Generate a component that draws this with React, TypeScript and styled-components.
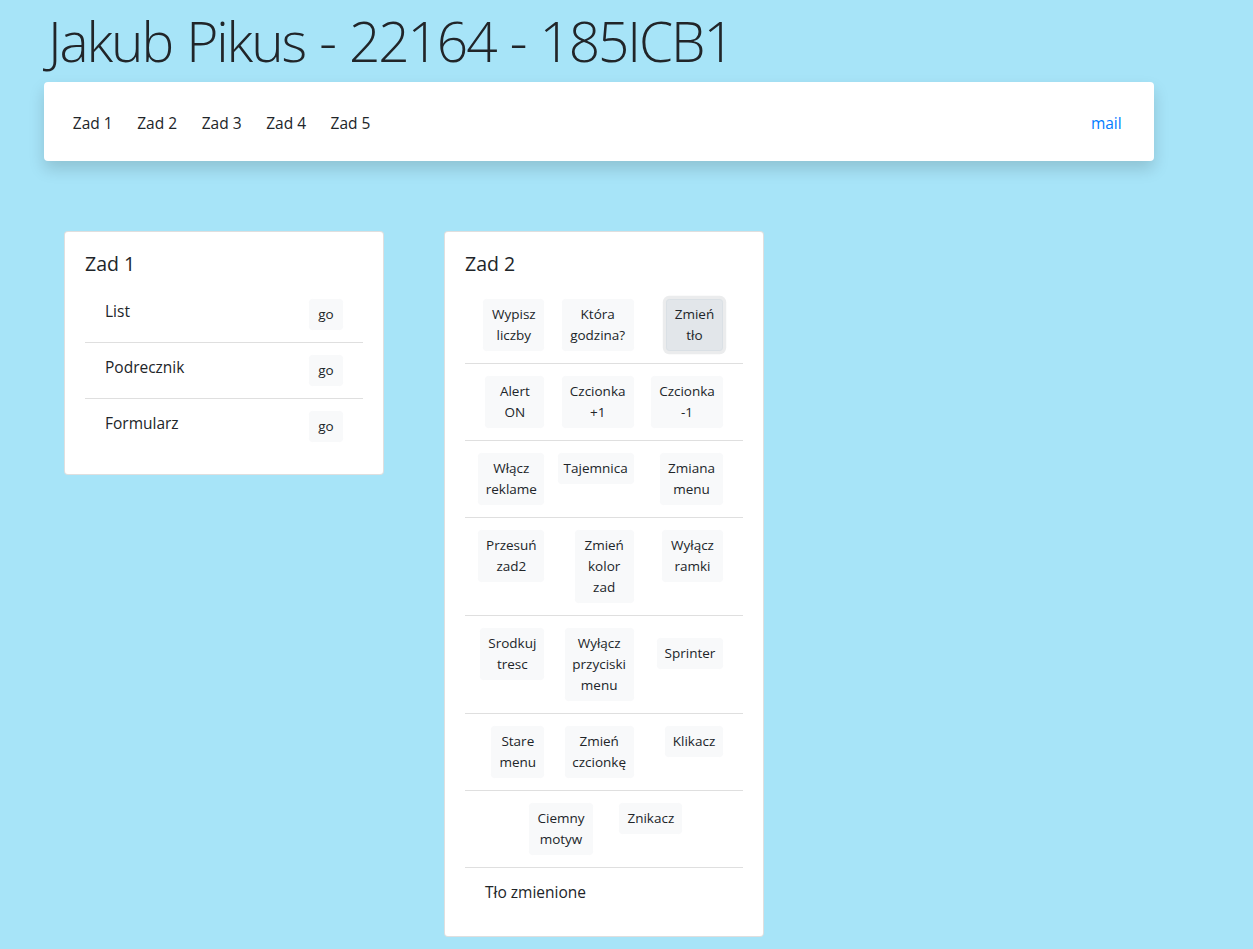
import React from "react";
import styled, { createGlobalStyle, css } from "styled-components";

const GlobalStyle = createGlobalStyle`
  html, body {
    margin: 0;
    padding: 0;
    background: #a7e4f8;
  }
  body {
    font-family: "Open Sans", "Noto Sans", Arial, sans-serif;
    color: #212529;
    font-size: 15.5px;
    line-height: 1.5;
  }
  * { box-sizing: border-box; }
`;

const Page = styled.div`
  padding: 8px 0 40px 44px;
  width: 1154px;
`;

const Title = styled.h1`
  margin: 0 0 8px 4px;
  font-size: 55px;
  font-weight: 300;
  line-height: 1.2;
  letter-spacing: -2.1px;
  word-spacing: 2px;
  color: #212529;
`;

const Navbar = styled.nav`
  height: 79px;
  background: #fff;
  border-radius: 4px;
  box-shadow: 0 8px 16px rgba(0, 0, 0, 0.15);
  display: flex;
  align-items: center;
  justify-content: space-between;
  padding: 2px 20px 0 16.5px;
`;

const NavList = styled.div`
  display: flex;
`;

const NavLink = styled.a<{ $accent?: boolean }>`
  padding: 0 12.3px;
  font-size: 15.5px;
  line-height: 24px;
  text-decoration: none;
  color: ${(p) => (p.$accent ? "#007bff" : "#212529")};
`;

const Cards = styled.div`
  display: flex;
  align-items: flex-start;
  gap: 60px;
  margin-top: 70px;
  padding-left: 20px;
`;

const Card = styled.section`
  width: 320px;
  background: #fff;
  border: 1px solid rgba(0, 0, 0, 0.125);
  border-radius: 4px;
  padding: 20px;
`;

const CardTitle = styled.h5`
  margin: 0 0 11px;
  font-size: 19.5px;
  font-weight: 500;
  line-height: 24px;
`;

const Item = styled.div`
  padding: 12px 20px;
  border-bottom: 1px solid rgba(0, 0, 0, 0.125);
  &:last-child {
    border-bottom: none;
  }
`;

const LinkItem = styled(Item)`
  display: flex;
  justify-content: space-between;
  align-items: flex-start;
`;

const ItemText = styled.span`
  font-size: 15.5px;
  line-height: 24px;
`;

const ButtonRow = styled.div<{ $cols: number }>`
  display: grid;
  grid-template-columns: repeat(${(p) => p.$cols}, 59.33px);
  column-gap: 30px;
  justify-items: end;
  align-items: start;
  ${(p) =>
    p.$cols === 2 &&
    css`
      justify-content: center;
      padding-left: 8px;
    `}
`;

const Btn = styled.button<{ $focused?: boolean; $offset?: number; $w: number }>`
  width: ${(p) => p.$w}px;
  font-family: inherit;
  font-size: 13.5px;
  line-height: 21px;
  padding: 4px 0;
  border-radius: 3.2px;
  white-space: nowrap;
  text-align: center;
  color: #212529;
  background: #f8f9fa;
  border: 1px solid #f8f9fa;
  margin-top: ${(p) => p.$offset ?? 0}px;
  cursor: pointer;
  ${(p) =>
    p.$focused &&
    css`
      background: #e2e6ea;
      border-color: #dae0e5;
      box-shadow: 0 0 0 3.2px rgba(216, 217, 219, 0.5);
    `}
`;

type B = { lines: string[]; w: number; focused?: boolean; offset?: number };

const rows: B[][] = [
  [
    { lines: ["Wypisz", "liczby"], w: 61 },
    { lines: ["Która", "godzina?"], w: 72 },
    { lines: ["Zmień", "tło"], w: 57, focused: true },
  ],
  [
    { lines: ["Alert", "ON"], w: 59 },
    { lines: ["Czcionka", "+1"], w: 72 },
    { lines: ["Czcionka", "-1"], w: 72 },
  ],
  [
    { lines: ["Włącz", "reklame"], w: 66 },
    { lines: ["Tajemnica"], w: 76 },
    { lines: ["Zmiana", "menu"], w: 63 },
  ],
  [
    { lines: ["Przesuń", "zad2"], w: 66 },
    { lines: ["Zmień", "kolor", "zad"], w: 59 },
    { lines: ["Wyłącz", "ramki"], w: 61 },
  ],
  [
    { lines: ["Srodkuj", "tresc"], w: 64 },
    { lines: ["Wyłącz", "przyciski", "menu"], w: 69 },
    { lines: ["Sprinter"], w: 66, offset: 10 },
  ],
  [
    { lines: ["Stare", "menu"], w: 53 },
    { lines: ["Zmień", "czcionkę"], w: 69 },
    { lines: ["Klikacz"], w: 58 },
  ],
  [
    { lines: ["Ciemny", "motyw"], w: 64 },
    { lines: ["Znikacz"], w: 63 },
  ],
];

const links = ["List", "Podrecznik", "Formularz"];

export default function App() {
  return (
    <>
      <GlobalStyle />
      <Page>
        <Title>Jakub Pikus - 22164 - 185ICB1</Title>
        <Navbar>
          <NavList>
            {["Zad 1", "Zad 2", "Zad 3", "Zad 4", "Zad 5"].map((z) => (
              <NavLink key={z} href="#">
                {z}
              </NavLink>
            ))}
          </NavList>
          <NavLink href="#" $accent>
            mail
          </NavLink>
        </Navbar>
        <Cards>
          <Card>
            <CardTitle>Zad 1</CardTitle>
            {links.map((l) => (
              <LinkItem key={l}>
                <ItemText>{l}</ItemText>
                <Btn $w={34}>go</Btn>
              </LinkItem>
            ))}
          </Card>
          <Card>
            <CardTitle>Zad 2</CardTitle>
            {rows.map((row, i) => (
              <Item key={i}>
                <ButtonRow $cols={row.length}>
                  {row.map((b, j) => (
                    <Btn key={j} $w={b.w} $focused={b.focused} $offset={b.offset}>
                      {b.lines.map((t, k) => (
                        <React.Fragment key={k}>
                          {k > 0 && <br />}
                          {t}
                        </React.Fragment>
                      ))}
                    </Btn>
                  ))}
                </ButtonRow>
              </Item>
            ))}
            <Item>
              <ItemText>Tło zmienione</ItemText>
            </Item>
          </Card>
        </Cards>
      </Page>
    </>
  );
}
